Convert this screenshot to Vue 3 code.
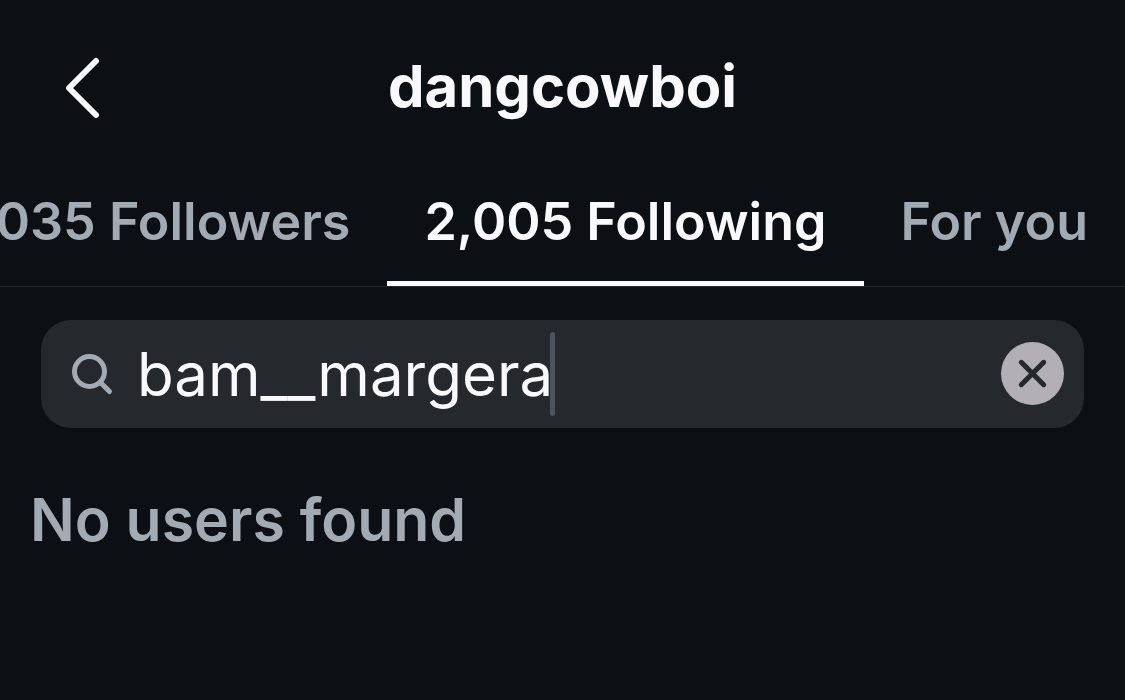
<script setup>
import { ref } from 'vue'
const query = ref('bam__margera')
const tabs = [
  { label: '035 Followers', active: false },
  { label: '2,005 Following', active: true },
  { label: 'For you', active: false },
]
</script>

<template>
  <main class="screen">
    <header class="bar">
      <button class="back" aria-label="Back">
        <svg width="36" height="64" viewBox="0 0 36 64"><path d="M32 5 5 32 32 59" /></svg>
      </button>
      <h1>dangcowboi</h1>
    </header>
    <nav class="tabs">
      <button v-for="t in tabs" :key="t.label" class="tab" :class="{ active: t.active }">{{ t.label }}</button>
    </nav>
    <section class="content">
      <div class="search">
        <svg class="glass" width="44" height="44" viewBox="0 0 44 44"><circle cx="18.5" cy="19.5" r="15" /><path d="M30 31 38.5 39.5" /></svg>
        <div class="field">
          <input v-model="query" aria-label="Search" size="12" />
          <span class="caret"></span>
        </div>
        <button class="clear" aria-label="Clear search" @click="query = ''">
          <svg viewBox="0 0 62 62"><path d="M20 20 42 42M42 20 20 42" /></svg>
        </button>
      </div>
      <p class="empty">No users found</p>
    </section>
  </main>
</template>

<style>
body { margin: 0; background: #0c1014; }
</style>

<style scoped>
.screen {
  min-height: 100vh;
  background: #0c1014;
  color: #f9f9fb;
  font-family: Inter, "Liberation Sans", sans-serif;
  overflow: hidden;
}
button, input { font: inherit; color: inherit; border: 0; padding: 0; background: none; }
svg { display: block; fill: none; stroke: currentColor; stroke-linecap: round; stroke-linejoin: round; }
.bar { display: grid; grid-template-columns: 64px 1fr 64px; align-items: center; height: 176px; padding: 0 32px; }
.back svg { margin-left: 32px; stroke-width: 6; }
h1 { margin: 0; padding-bottom: 4px; text-align: center; font-size: 58px; line-height: 72px; font-weight: 700; }
.tabs { display: flex; justify-content: flex-end; height: 110px; border-bottom: 1px solid #25292e; }
.tab { flex: none; padding: 0 37px 20px; font-size: 52px; font-weight: 600; color: #a2aab4; white-space: nowrap; }
.tab.active { color: #f9f9fb; box-shadow: inset 0 -5px #f9f9fb; }
.content { padding-top: 33px; }
.search { display: flex; align-items: center; height: 108px; margin: 0 41px; border-radius: 30px; background: #25282d; padding: 0 20px 0 30px; box-sizing: border-box; }
.glass { color: #a2aab4; stroke-width: 5; }
.field { flex: 1; display: flex; align-items: center; margin-left: 22px; }
.field input { field-sizing: content; font-size: 60px; height: 84px; margin-right: -3px; outline: 0; }
.caret { width: 5px; height: 84px; border-radius: 3px; background: #4c535c; }
.clear { width: 63px; height: 63px; margin-bottom: 2px; border-radius: 50%; background: #b2b0b5; color: #25282d; }
.clear svg { stroke-width: 5; }
.empty { margin: 56px 30px 0; font-size: 59px; line-height: 72px; font-weight: 600; color: #a2aab4; }
</style>
